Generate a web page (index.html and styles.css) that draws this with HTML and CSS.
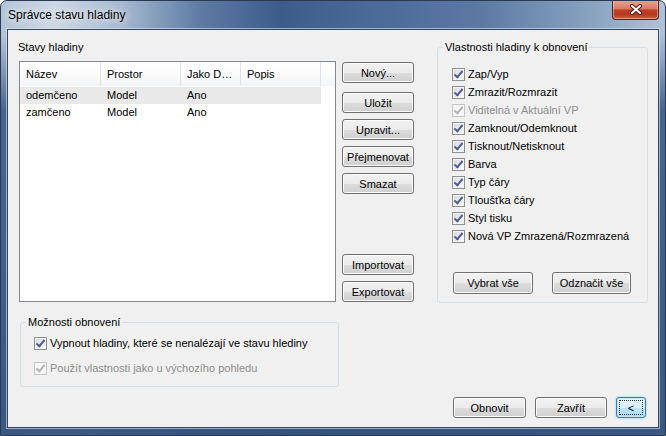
FILE: index.html
```html
<!DOCTYPE html>
<html>
<head>
    <title>Správce stavu hladiny</title>
    <meta charset="utf-8">
    <link rel="stylesheet" href="styles.css">
</head>
<body>
    <div class="window">
        <div class="titlebar">
            <span class="title">Správce stavu hladiny</span>
            <button class="close-button" title="Zavřít">
                <svg width="14" height="11" viewBox="0 0 14 11">
                    <path d="M3 2 L11 9 M11 2 L3 9" stroke="#4a1e12" stroke-width="4" stroke-linecap="round"/>
                    <path d="M3 2 L11 9 M11 2 L3 9" stroke="#fff" stroke-width="2" stroke-linecap="round"/>
                </svg>
            </button>
        </div>

        <div class="client">
            <div class="main">
                <!-- Layer states list with its buttons -->
                <div class="states">
                    <div class="label">Stavy hladiny</div>
                    <div class="states-body">
                        <div class="list">
                            <div class="list-head">
                                <div class="cell c-name">Název</div>
                                <div class="cell c-space">Prostor</div>
                                <div class="cell c-default">Jako D…</div>
                                <div class="cell c-desc">Popis</div>
                                <div class="cell c-rest"></div>
                            </div>
                            <div class="list-row is-selected">
                                <div class="cell c-name">odemčeno</div>
                                <div class="cell c-space">Model</div>
                                <div class="cell c-default">Ano</div>
                                <div class="cell c-desc"></div>
                            </div>
                            <div class="list-row">
                                <div class="cell c-name">zamčeno</div>
                                <div class="cell c-space">Model</div>
                                <div class="cell c-default">Ano</div>
                                <div class="cell c-desc"></div>
                            </div>
                        </div>
                        <div class="side-buttons">
                            <button class="btn side first">Nový...</button>
                            <button class="btn side">Uložit</button>
                            <button class="btn side">Upravit...</button>
                            <button class="btn side">Přejmenovat</button>
                            <button class="btn side">Smazat</button>
                            <button class="btn side import">Importovat</button>
                            <button class="btn side last">Exportovat</button>
                        </div>
                    </div>
                </div>

                <!-- Properties to restore -->
                <fieldset class="group props">
                    <legend>Vlastnosti hladiny k obnovení</legend>
                    <div class="check"><span class="box"></span>Zap/Vyp</div>
                    <div class="check"><span class="box"></span>Zmrazit/Rozmrazit</div>
                    <div class="check is-disabled"><span class="box"></span>Viditelná v Aktuální VP</div>
                    <div class="check"><span class="box"></span>Zamknout/Odemknout</div>
                    <div class="check"><span class="box"></span>Tisknout/Netisknout</div>
                    <div class="check"><span class="box"></span>Barva</div>
                    <div class="check"><span class="box"></span>Typ čáry</div>
                    <div class="check"><span class="box"></span>Tloušťka čáry</div>
                    <div class="check"><span class="box"></span>Styl tisku</div>
                    <div class="check"><span class="box"></span>Nová VP Zmrazená/Rozmrazená</div>
                    <div class="group-buttons">
                        <button class="btn select-all">Vybrat vše</button>
                        <button class="btn clear-all">Odznačit vše</button>
                    </div>
                </fieldset>

                <!-- Restore options -->
                <fieldset class="group restore">
                    <legend>Možnosti obnovení</legend>
                    <div class="check"><span class="box"></span>Vypnout hladiny, které se nenalézají ve stavu hlediny</div>
                    <div class="check is-disabled second"><span class="box"></span>Použít vlastnosti jako u výchozího pohledu</div>
                </fieldset>
            </div>

            <div class="footer">
                <button class="btn restore-btn">Obnovit</button>
                <button class="btn close-btn">Zavřít</button>
                <button class="btn less-btn is-default">&lt;</button>
            </div>
        </div>
    </div>
</body>
</html>
```

FILE: styles.css
```css
* {
    box-sizing: border-box;
}

body {
    margin: 0;
    font-family: "Liberation Sans", Arial, sans-serif;
    font-size: 11px;
    color: #000;
    background: #fff;
}

/* Window frame */
.window {
    width: 666px;
    height: 436px;
    border: 1px solid #2a3a52;
    border-radius: 7px 7px 0 0;
    background:
        linear-gradient(to bottom, rgba(59, 90, 135, 0) 0, rgba(59, 90, 135, 0) 34px, rgba(59, 90, 135, 0.9) 110px, rgba(52, 82, 125, 0.95) 100%),
        linear-gradient(to right, #b3c4d8 0%, #cdd8e5 8%, #a7bad0 18%, #5d7ba4 30%, #3c5c8a 42%, #4a6a97 56%, #5b79a3 72%, #86a0bf 88%, #b1c2d6 100%);
    display: flex;
    flex-direction: column;
    overflow: hidden;
}

.titlebar {
    height: 29px;
    display: flex;
    align-items: flex-start;
    padding-left: 7px;
}

.title {
    margin-top: 6px;
    font-size: 12px;
    line-height: 17px;
    text-shadow: 0 0 6px rgba(255, 255, 255, 0.9), 0 0 12px rgba(255, 255, 255, 0.8);
}

.close-button {
    margin: -1px 6px 0 auto;
    width: 47px;
    height: 20px;
    padding: 0;
    border: 1px solid #4b2a24;
    border-top: none;
    border-radius: 0 0 4px 4px;
    background: linear-gradient(#e9a796 0%, #d97c66 45%, #c2402a 52%, #b73720 75%, #d4603f 100%);
    box-shadow: inset 0 0 0 1px rgba(255, 220, 210, 0.45);
    display: flex;
    align-items: center;
    justify-content: center;
}

/* Dialog client area */
.client {
    margin: 0 7px 8px;
    height: 397px;
    background: #f0f0f0;
    box-shadow: 0 0 0 1px #33475f, 0 0 0 2px rgba(220, 230, 242, 0.6);
    padding: 10px 10px 0 11px;
    display: flex;
    flex-direction: column;
}

.main {
    display: grid;
    grid-template-columns: 395px 211px;
    column-gap: 23px;
    row-gap: 12px;
    align-items: start;
}

.label {
    line-height: 14px;
    margin-left: -1px;
}

.states-body {
    display: flex;
    gap: 6px;
    margin-top: 7px;
}

/* List view */
.list {
    width: 317px;
    height: 241px;
    border: 1px solid #828790;
    background: #fff;
}

.list-head {
    display: flex;
    height: 24px;
    background: linear-gradient(#ffffff 0%, #fbfbfc 50%, #f3f4f6 100%);
}

.list-head .cell {
    line-height: 24px;
    border-right: 1px solid #dfe3e8;
}

.list-head .c-rest {
    flex: 1;
    border-right: none;
}

.list-row {
    display: flex;
    width: 301px;
    height: 17px;
    line-height: 17px;
}

.list-row:first-of-type,
.list-head + .list-row {
    margin-top: 1px;
}

.list-row.is-selected {
    background: #e9e9e9;
}

.cell {
    padding-left: 6px;
    white-space: nowrap;
    overflow: hidden;
}

.c-name {
    width: 81px;
}

.c-space {
    width: 80px;
}

.c-default {
    width: 60px;
}

.c-desc {
    width: 80px;
}

/* Buttons */
.btn {
    font: inherit;
    color: #000;
    height: 21px;
    padding: 0;
    border: 1px solid #707070;
    border-radius: 3px;
    background: linear-gradient(#f2f2f2 0%, #ebebeb 50%, #dddddd 51%, #cfcfcf 100%);
    box-shadow: inset 0 0 0 1px #fbfbfb;
}

.side-buttons {
    display: flex;
    flex-direction: column;
    width: 72px;
    padding-top: 1px;
}

.side {
    width: 72px;
    margin-bottom: 6px;
}

.side.first {
    margin-bottom: 9px;
}

.side.import {
    margin-top: auto;
}

.side.last {
    margin-bottom: 0;
}

/* Group boxes */
.group {
    margin: 0;
    border: 1px solid #d5dfe5;
    border-radius: 3px;
    padding: 0 5px;
    min-width: 0;
}

.group legend {
    padding: 0 2px;
    line-height: 14px;
}

.props {
    height: 263px;
    padding-top: 11px;
}

.check {
    display: flex;
    align-items: center;
    height: 18px;
    margin-left: 9px;
    white-space: nowrap;
}

.box {
    position: relative;
    flex: none;
    width: 13px;
    height: 13px;
    margin-right: 3px;
    border: 1px solid #8e8f8f;
    background: linear-gradient(135deg, #d8d8d8, #fbfbfb);
    box-shadow: inset 0 0 0 1px #f4f4f4;
}

.box::after {
    content: "";
    position: absolute;
    left: 3px;
    top: 0;
    width: 3px;
    height: 7px;
    border: solid #4a5f97;
    border-width: 0 2px 2px 0;
    transform: rotate(40deg);
}

.check.is-disabled {
    color: #8d8d8d;
}

.check.is-disabled .box {
    border-color: #c5c5c5;
    background: #f6f6f6;
}

.check.is-disabled .box::after {
    border-color: #b4b4b4;
}

.group-buttons {
    display: flex;
    gap: 19px;
    margin: 27px 0 0 10px;
}

.select-all {
    width: 80px;
    height: 22px;
}

.clear-all {
    width: 79px;
    height: 22px;
}

.restore {
    width: 319px;
    height: 72px;
    margin-left: 1px;
    padding-top: 5px;
}

.restore .check {
    margin-left: 8px;
}

.restore .second {
    margin-top: 7px;
}

/* Footer */
.footer {
    display: flex;
    justify-content: flex-end;
    gap: 9px;
    margin-top: 10px;
    padding-right: 2px;
}

.restore-btn {
    width: 73px;
}

.close-btn {
    width: 72px;
}

.less-btn {
    width: 30px;
}

.btn.is-default {
    border-color: #3c7fb1;
    background: linear-gradient(#eaf6fd 0%, #d9f0fc 50%, #bee6fd 51%, #a7d9f5 100%);
    box-shadow: inset 0 0 0 1px #c4e5f6, 0 0 2px #6fc0ea;
    outline: 1px dotted #333;
    outline-offset: -4px;
}
```
